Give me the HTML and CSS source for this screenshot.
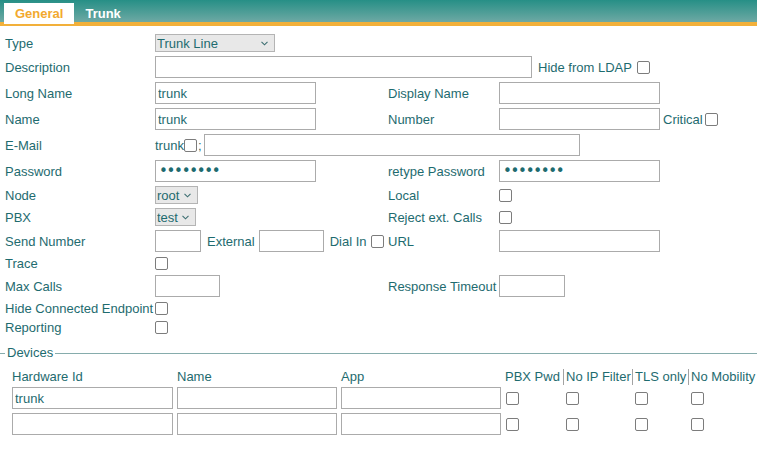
FILE: index.html
```html
<!DOCTYPE html>
<html lang="en">
<head>
  <meta charset="UTF-8">
  <title>Trunk</title>
  <link rel="stylesheet" href="styles.css">
</head>
<body>
  <div class="tabs">
    <span class="tab active">General</span>
    <span class="tab">Trunk</span>
  </div>

  <form class="form">
    <div class="row sel">
      <label>Type</label>
      <div class="field">
        <span class="select w-type">
          <select><option>Trunk Line</option></select>
          <svg width="7" height="5" viewBox="0 0 7 5"><path d="M0.5 0.8 L3.5 3.8 L6.5 0.8" fill="none" stroke="#3d6f72" stroke-width="1.1"/></svg>
        </span>
      </div>
    </div>

    <div class="row in">
      <label>Description</label>
      <div class="field span3">
        <input class="w-desc">
        <span class="after">Hide from LDAP</span>
        <input type="checkbox" class="cb-gap">
      </div>
    </div>

    <div class="row in">
      <label>Long Name</label>
      <div class="field"><input class="w-long" value="trunk"></div>
      <label>Display Name</label>
      <div class="field"><input class="w-long"></div>
    </div>

    <div class="row in">
      <label>Name</label>
      <div class="field"><input class="w-long" value="trunk"></div>
      <label>Number</label>
      <div class="field">
        <input class="w-long">
        <span class="after tight">Critical</span>
        <input type="checkbox" class="cb-tight">
      </div>
    </div>

    <div class="row in">
      <label>E-Mail</label>
      <div class="field span3">
        <span>trunk</span><input type="checkbox" class="cb-mail"><span>;</span>
        <input class="w-mail">
      </div>
    </div>

    <div class="row in">
      <label>Password</label>
      <div class="field"><input type="password" class="w-long pw" value="password"></div>
      <label>retype Password</label>
      <div class="field"><input type="password" class="w-long pw" value="password"></div>
    </div>

    <div class="row sel">
      <label>Node</label>
      <div class="field">
        <span class="select w-node">
          <select><option>root</option></select>
          <svg width="7" height="5" viewBox="0 0 7 5"><path d="M0.5 0.8 L3.5 3.8 L6.5 0.8" fill="none" stroke="#3d6f72" stroke-width="1.1"/></svg>
        </span>
      </div>
      <label>Local</label>
      <div class="field"><input type="checkbox"></div>
    </div>

    <div class="row sel">
      <label>PBX</label>
      <div class="field">
        <span class="select w-pbx">
          <select><option>test</option></select>
          <svg width="7" height="5" viewBox="0 0 7 5"><path d="M0.5 0.8 L3.5 3.8 L6.5 0.8" fill="none" stroke="#3d6f72" stroke-width="1.1"/></svg>
        </span>
      </div>
      <label>Reject ext. Calls</label>
      <div class="field"><input type="checkbox"></div>
    </div>

    <div class="row in">
      <label>Send Number</label>
      <div class="field">
        <input class="w-send">
        <span class="after">External</span>
        <input class="w-mid ext">
        <span class="after dial">Dial In</span>
        <input type="checkbox" class="cb-dial">
      </div>
      <label>URL</label>
      <div class="field"><input class="w-long"></div>
    </div>

    <div class="row chk">
      <label>Trace</label>
      <div class="field"><input type="checkbox"></div>
    </div>

    <div class="row in">
      <label>Max Calls</label>
      <div class="field"><input class="w-mid"></div>
      <label>Response Timeout</label>
      <div class="field"><input class="w-timeout"></div>
    </div>

    <div class="row chk">
      <label>Hide Connected Endpoint</label>
      <div class="field"><input type="checkbox"></div>
    </div>

    <div class="row chk">
      <label>Reporting</label>
      <div class="field"><input type="checkbox"></div>
    </div>

    <fieldset class="devices">
      <legend>Devices</legend>
      <table>
        <thead>
          <tr>
            <th class="c-hw">Hardware Id</th>
            <th class="c-name">Name</th>
            <th class="c-app">App</th>
            <th class="c-pwd">PBX Pwd</th>
            <th class="c-ip sep">No IP Filter</th>
            <th class="c-tls sep">TLS only</th>
            <th class="c-mob sep">No Mobility</th>
          </tr>
        </thead>
        <tbody>
          <tr>
            <td><input class="w-long" value="trunk"></td>
            <td><input class="w-dev"></td>
            <td><input class="w-dev"></td>
            <td><input type="checkbox"></td>
            <td><input type="checkbox"></td>
            <td><input type="checkbox"></td>
            <td><input type="checkbox"></td>
          </tr>
          <tr>
            <td><input class="w-long"></td>
            <td><input class="w-dev"></td>
            <td><input class="w-dev"></td>
            <td><input type="checkbox"></td>
            <td><input type="checkbox"></td>
            <td><input type="checkbox"></td>
            <td><input type="checkbox"></td>
          </tr>
        </tbody>
      </table>
    </fieldset>
  </form>
</body>
</html>
```

FILE: styles.css
```css
body {
  margin: 0;
  font-family: "Liberation Sans", Arial, sans-serif;
  font-size: 13px;
  color: #1e6b6f;
  background: #fff;
}
.tabs {
  display: flex;
  align-items: flex-end;
  height: 22px;
  padding-left: 4px;
  background: linear-gradient(#268f86, #6ea9a4);
  border-bottom: 4px solid #f2b03a;
}
.tab {
  height: 21px;
  line-height: 21px;
  margin-bottom: -2px;
  padding: 0 11px 0 11px;
  font-weight: bold;
  color: #fff;
}
.tab.active {
  background: #fff;
  color: #f2a92e;
}
.form {
  padding: 6px 0 0 4px;
}
.row {
  display: grid;
  grid-template-columns: 151px 232px 112px 1fr;
  align-items: center;
  white-space: nowrap;
}
.row.in { height: 26px; }
.row.sel { height: 22px; }
.row.chk { height: 19px; }
.row label {
  padding-left: 1px;
}
.field {
  display: flex;
  align-items: center;
}
.field.span3 {
  grid-column: 2 / span 3;
}
input {
  box-sizing: border-box;
  height: 22px;
  margin: 0;
  padding: 0 2px;
  border: 1px solid #ababab;
  font-family: inherit;
  font-size: 13px;
  color: #1e6b6f;
  outline: none;
}
input[type=checkbox] {
  appearance: none;
  -webkit-appearance: none;
  width: 13px;
  height: 13px;
  margin: 0;
  padding: 0;
  border: 1px solid #7c7c7c;
  border-radius: 2px;
  background: #fff;
}
.pw {
  font-family: "DejaVu Sans", sans-serif;
  font-size: 15px;
  letter-spacing: -1.3px;
  padding-left: 3px;
}
.w-long { width: 161px; }
.w-desc { width: 377px; }
.w-mail { width: 376px; margin-left: 2px; }
.w-send { width: 46px; }
.w-mid { width: 65px; }
.w-timeout { width: 66px; }
.w-dev { width: 160px; }
.after { margin-left: 6px; }
.after.tight { margin-left: 3px; }
.after.dial { margin-left: 6px; }
.ext { margin-left: 4px; }
.cb-gap { margin-left: 5px !important; }
.cb-tight { margin-left: 2px !important; }
.cb-mail { margin: 0 1px 0 0 !important; }
.cb-dial { margin-left: 4px !important; }

.select {
  position: relative;
  display: inline-block;
  height: 18px;
}
.select select {
  appearance: none;
  -webkit-appearance: none;
  box-sizing: border-box;
  width: 100%;
  height: 18px;
  margin: 0;
  padding: 0 0 0 1px;
  border: 1px solid #b4b4b4;
  border-radius: 0;
  background: #e8e8e8;
  font-family: inherit;
  font-size: 13px;
  color: #1e6b6f;
  outline: none;
}
.select svg {
  position: absolute;
  right: 7px;
  top: 7px;
}
.w-type { width: 120px; }
.w-node { width: 43px; }
.w-pbx { width: 41px; }

.devices {
  margin: 8px 0 0 -4px;
  padding: 0 0 0 10px;
  border: none;
  border-top: 1px solid #86acac;
}
.devices legend {
  margin-left: -5px;
  padding: 0 2px;
  line-height: 16px;
}
table {
  table-layout: fixed;
  width: 747px;
  border-spacing: 0;
  margin-top: 8px;
}
th {
  font-weight: normal;
  text-align: left;
  padding: 0 2px;
  line-height: 16px;
  white-space: nowrap;
}
th.sep { border-left: 1px solid #a3a3a3; }
td {
  padding: 2px;
  height: 22px;
  vertical-align: middle;
}
td input[type=checkbox] {
  margin-left: 1px;
  display: block;
}
.c-hw { width: 161px; }
.c-name { width: 160px; }
.c-app { width: 160px; }
.c-pwd { width: 56px; }
.c-ip { width: 64px; }
.c-tls { width: 51px; }
.c-mob { width: 64px; }
```
